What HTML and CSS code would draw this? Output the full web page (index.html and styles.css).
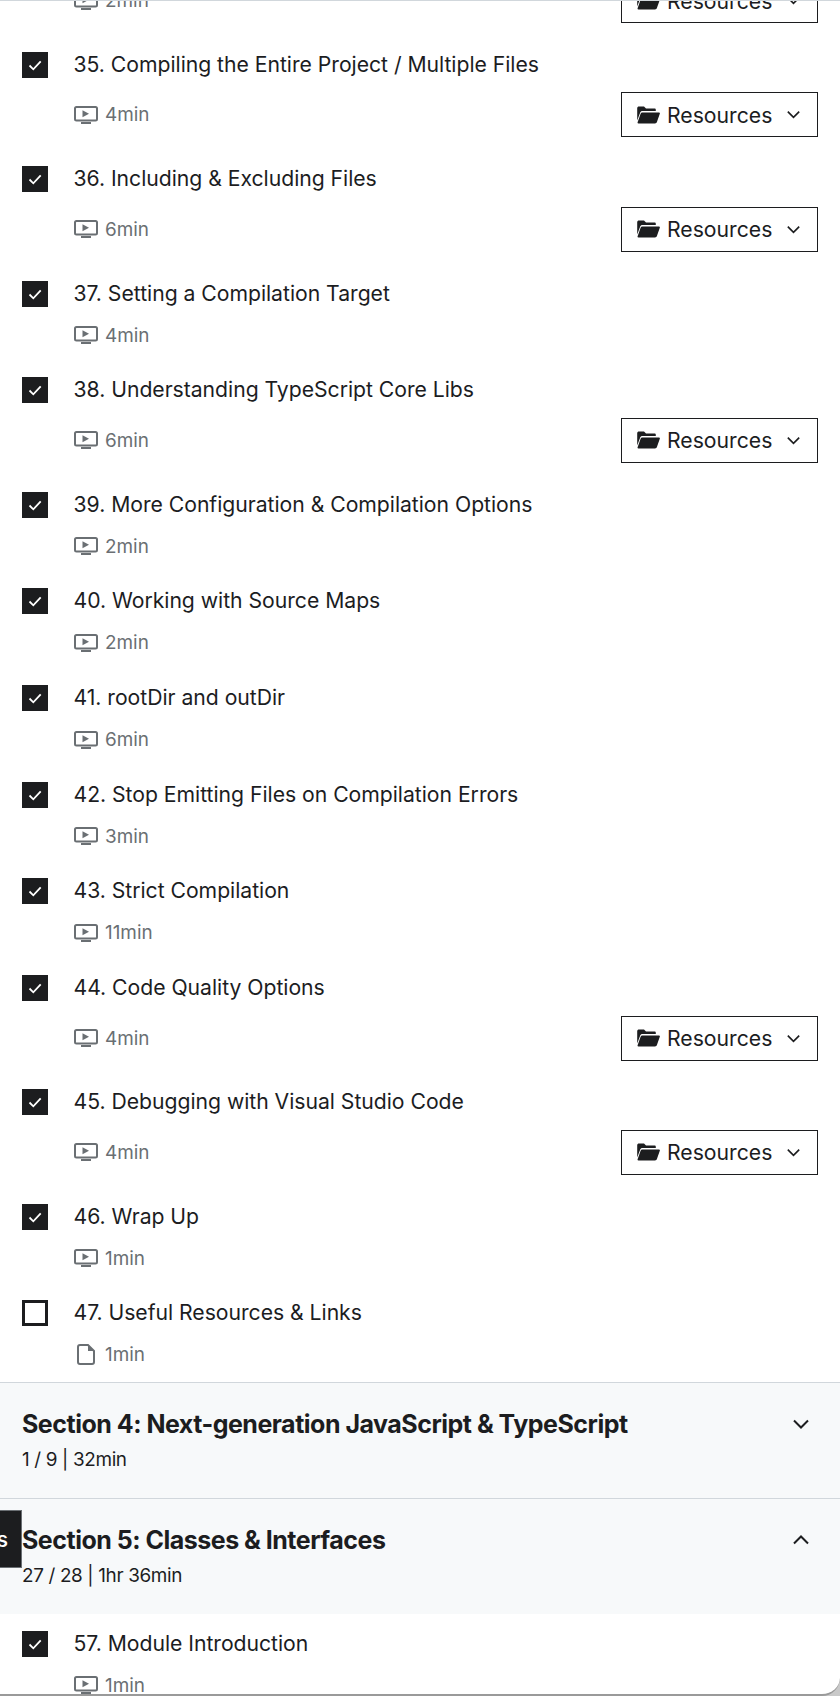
FILE: index.html
```html
<!DOCTYPE html>
<html lang="en">
<head>
<meta charset="utf-8">
<title>Course content</title>
<link rel="stylesheet" href="styles.css">
</head>
<body>
<svg class="defs" width="0" height="0" aria-hidden="true">
  <symbol id="i-check" viewBox="0 0 26 26"><path d="M7.5 13.500l3.800 3.800 7.400-8" fill="none" stroke="#fff" stroke-width="1.800"/></symbol>
  <symbol id="i-play" viewBox="0 0 24 18"><rect x="1" y="1" width="22" height="13.500" rx="1.500" fill="none" stroke="currentColor" stroke-width="2"/><path d="M8.500 4.300v6.900l6.500-3.450z" fill="currentColor"/><path d="M7 16h10v2H7z" fill="currentColor"/></symbol>
  <symbol id="i-file" viewBox="0 0 18 21"><path d="M3 1h8l6 6v11a2 2 0 0 1-2 2H3a2 2 0 0 1-2-2V3a2 2 0 0 1 2-2z" fill="none" stroke="currentColor" stroke-width="2"/><path d="M11 1l6 6h-6z" fill="currentColor"/></symbol>
  <symbol id="i-folder" viewBox="0 0 24 18"><path d="M1.200 2.200C1.200 1 2 .5 3 .5h5l2 2h8.500c.8 0 1.300.5 1.300 1.300V5H6.500c-1.200 0-2 .6-2.400 1.700L1.200 14.500z" fill="currentColor"/><path d="M6.300 6.500H23c.7 0 1.100.6.800 1.300L21 15.800c-.3.900-1 1.700-2 1.700H2.500c-.8 0-1.100-.5-.9-1.200L4.600 7.700c.3-.8.9-1.200 1.700-1.200z" fill="currentColor"/></symbol>
  <symbol id="i-chev" viewBox="0 0 16 10"><path d="M1 1.500l7 7 7-7" fill="none" stroke="currentColor" stroke-width="2"/></symbol>
</svg>
<div class="frame">
  <div class="tab"><span class="tab-text">s</span></div>
  <div class="list">
    <div class="row res">
      <span class="box on"><svg class="ck"><use href="#i-check"/></svg></span>
      <div class="body"><div class="title">34. Using Watch Mode</div><div class="meta"><span class="dur"><svg class="play"><use href="#i-play"/></svg>2min</span><span class="btn"><svg class="folder"><use href="#i-folder"/></svg>Resources<svg class="chev-s"><use href="#i-chev"/></svg></span></div></div>
    </div>
    <div class="row res">
      <span class="box on"><svg class="ck"><use href="#i-check"/></svg></span>
      <div class="body"><div class="title">35. Compiling the Entire Project / Multiple Files</div><div class="meta"><span class="dur"><svg class="play"><use href="#i-play"/></svg>4min</span><span class="btn"><svg class="folder"><use href="#i-folder"/></svg>Resources<svg class="chev-s"><use href="#i-chev"/></svg></span></div></div>
    </div>
    <div class="row res">
      <span class="box on"><svg class="ck"><use href="#i-check"/></svg></span>
      <div class="body"><div class="title">36. Including &amp; Excluding Files</div><div class="meta"><span class="dur"><svg class="play"><use href="#i-play"/></svg>6min</span><span class="btn"><svg class="folder"><use href="#i-folder"/></svg>Resources<svg class="chev-s"><use href="#i-chev"/></svg></span></div></div>
    </div>
    <div class="row">
      <span class="box on"><svg class="ck"><use href="#i-check"/></svg></span>
      <div class="body"><div class="title">37. Setting a Compilation Target</div><div class="meta"><span class="dur"><svg class="play"><use href="#i-play"/></svg>4min</span></div></div>
    </div>
    <div class="row res">
      <span class="box on"><svg class="ck"><use href="#i-check"/></svg></span>
      <div class="body"><div class="title">38. Understanding TypeScript Core Libs</div><div class="meta"><span class="dur"><svg class="play"><use href="#i-play"/></svg>6min</span><span class="btn"><svg class="folder"><use href="#i-folder"/></svg>Resources<svg class="chev-s"><use href="#i-chev"/></svg></span></div></div>
    </div>
    <div class="row">
      <span class="box on"><svg class="ck"><use href="#i-check"/></svg></span>
      <div class="body"><div class="title">39. More Configuration &amp; Compilation Options</div><div class="meta"><span class="dur"><svg class="play"><use href="#i-play"/></svg>2min</span></div></div>
    </div>
    <div class="row">
      <span class="box on"><svg class="ck"><use href="#i-check"/></svg></span>
      <div class="body"><div class="title">40. Working with Source Maps</div><div class="meta"><span class="dur"><svg class="play"><use href="#i-play"/></svg>2min</span></div></div>
    </div>
    <div class="row">
      <span class="box on"><svg class="ck"><use href="#i-check"/></svg></span>
      <div class="body"><div class="title">41. rootDir and outDir</div><div class="meta"><span class="dur"><svg class="play"><use href="#i-play"/></svg>6min</span></div></div>
    </div>
    <div class="row">
      <span class="box on"><svg class="ck"><use href="#i-check"/></svg></span>
      <div class="body"><div class="title">42. Stop Emitting Files on Compilation Errors</div><div class="meta"><span class="dur"><svg class="play"><use href="#i-play"/></svg>3min</span></div></div>
    </div>
    <div class="row">
      <span class="box on"><svg class="ck"><use href="#i-check"/></svg></span>
      <div class="body"><div class="title">43. Strict Compilation</div><div class="meta"><span class="dur"><svg class="play"><use href="#i-play"/></svg>11min</span></div></div>
    </div>
    <div class="row res">
      <span class="box on"><svg class="ck"><use href="#i-check"/></svg></span>
      <div class="body"><div class="title">44. Code Quality Options</div><div class="meta"><span class="dur"><svg class="play"><use href="#i-play"/></svg>4min</span><span class="btn"><svg class="folder"><use href="#i-folder"/></svg>Resources<svg class="chev-s"><use href="#i-chev"/></svg></span></div></div>
    </div>
    <div class="row res">
      <span class="box on"><svg class="ck"><use href="#i-check"/></svg></span>
      <div class="body"><div class="title">45. Debugging with Visual Studio Code</div><div class="meta"><span class="dur"><svg class="play"><use href="#i-play"/></svg>4min</span><span class="btn"><svg class="folder"><use href="#i-folder"/></svg>Resources<svg class="chev-s"><use href="#i-chev"/></svg></span></div></div>
    </div>
    <div class="row">
      <span class="box on"><svg class="ck"><use href="#i-check"/></svg></span>
      <div class="body"><div class="title">46. Wrap Up</div><div class="meta"><span class="dur"><svg class="play"><use href="#i-play"/></svg>1min</span></div></div>
    </div>
    <div class="row last">
      <span class="box"></span>
      <div class="body"><div class="title">47. Useful Resources &amp; Links</div><div class="meta"><span class="dur"><svg class="file"><use href="#i-file"/></svg>1min</span></div></div>
    </div>
    <div class="section">
      <div class="sec-text"><div class="sec-title">Section 4: Next-generation JavaScript &amp; TypeScript</div><div class="sec-sub">1 / 9 | 32min</div></div>
      <svg class="chev"><use href="#i-chev"/></svg>
    </div>
    <div class="section open">
      <div class="sec-text"><div class="sec-title">Section 5: Classes &amp; Interfaces</div><div class="sec-sub">27 / 28 | 1hr 36min</div></div>
      <svg class="chev up"><use href="#i-chev"/></svg>
    </div>
    <div class="row">
      <span class="box on"><svg class="ck"><use href="#i-check"/></svg></span>
      <div class="body"><div class="title">57. Module Introduction</div><div class="meta"><span class="dur"><svg class="play"><use href="#i-play"/></svg>1min</span></div></div>
    </div>
  </div>
</div>
</body>
</html>
```
FILE: styles.css
```css
* { box-sizing: border-box; }
html, body { margin: 0; padding: 0; background: #c9c9c9; }
body { font-family: Inter, "Liberation Sans", sans-serif; color: #1c1d1f; width: 840px; height: 1696px; overflow: hidden; }
.defs { position: absolute; }
.frame { position: relative; width: 840px; height: 1696px; overflow: hidden; border-top: 1px solid #d1d7dc; border-bottom: 2px solid #9a9a9a; border-bottom-right-radius: 18px; background: #fff; }
.list { margin-top: -80.4px; }
.row { display: flex; gap: 25.500px; padding: 17px 22px 0; height: 96.7px; }
.row.res { height: 114.35px; }
.row.last { height: 98.2px; }
.box { flex: none; width: 26px; height: 26px; border: 3px solid #1c1d1f; display: block; }
.box.on { border: 0; background: #1c1d1f; }
.ck { display: block; width: 26px; height: 26px; }
.body { flex: 1; min-width: 0; }
.title { font-size: 21.2px; line-height: 24px; letter-spacing: -0.03px; }
.meta { display: flex; justify-content: space-between; align-items: center; margin-top: 15.5px; height: 30px; }
.res .meta { margin-top: 16.5px; height: 45px; }
.dur { display: flex; align-items: center; gap: 7px; font-size: 18.900px; color: #6a6f73; }
.play { width: 24px; height: 18px; margin-left: .5px; }
.file { width: 18px; height: 21px; margin: 0 3px 0 3.500px; }
.btn { display: flex; align-items: center; width: 197px; height: 45px; border: 1.500px solid #1c1d1f; padding-left: 13.500px; font-size: 21.200px; }
.folder { width: 24px; height: 18px; margin-right: 7.500px; }
.chev-s { width: 13px; height: 9px; margin-left: 14.500px; }
.section { display: flex; justify-content: space-between; align-items: flex-start; height: 116px; padding: 24px 22px 0; background: #f7f9fa; border-top: 1.500px solid #d1d7dc; }
.sec-title { font-size: 25px; line-height: 34px; font-weight: 700; letter-spacing: -0.5px; }
.sec-sub { font-size: 18.900px; line-height: 28px; margin-top: 5px; letter-spacing: -0.35px; }
.chev { width: 16px; height: 10px; margin: 12px 9px 0 0; }
.chev.up { transform: rotate(180deg); }
.tab { position: absolute; left: 0; top: 1509px; width: 22px; height: 58px; background: #1c1d1f; border: 1px solid #6a6f73; border-left: 0; overflow: hidden; z-index: 2; }
.tab-text { position: absolute; right: 13px; top: 16px; color: #fff; font-size: 21px; font-weight: 500; }
```
